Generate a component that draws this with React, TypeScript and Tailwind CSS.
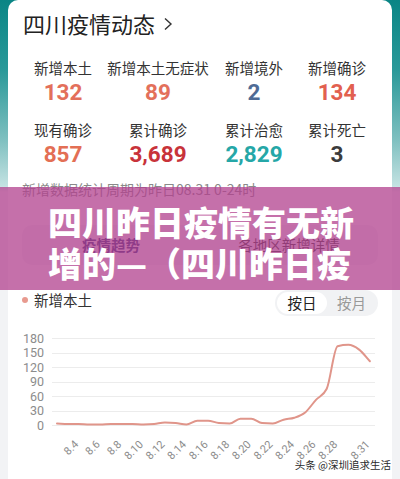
import React from "react";

const vals: number[] = [3, 2, 2, 1, 1, 2, 2, 2, 1, 2, 5, 4, 1, 9, 9, 4, 3, 13, 13, 4, 3, 11, 15, 26, 52, 75, 163, 166, 156, 132];
// days 2..31
const X0 = 57;
const DX = 10.79;
const xOf = (d: number) => X0 + (d - 2) * DX;
const yOf = (v: number) => 425 - v * (87 / 180);

function monotonePath(pts: [number, number][]) {
  const n = pts.length;
  const t: number[] = new Array(n).fill(0);
  const s: number[] = [];
  for (let i = 0; i < n - 1; i++) {
    s.push((pts[i + 1][1] - pts[i][1]) / (pts[i + 1][0] - pts[i][0]));
  }
  t[0] = s[0];
  t[n - 1] = s[n - 2];
  for (let i = 1; i < n - 1; i++) {
    const s0 = s[i - 1];
    const s1 = s[i];
    const h0 = pts[i][0] - pts[i - 1][0];
    const h1 = pts[i + 1][0] - pts[i][0];
    const p = (s0 * h1 + s1 * h0) / (h0 + h1);
    t[i] = (Math.sign(s0) + Math.sign(s1)) * Math.min(Math.abs(s0), Math.abs(s1), 0.5 * Math.abs(p));
  }
  let d = `M${pts[0][0].toFixed(2)},${pts[0][1].toFixed(2)}`;
  for (let i = 0; i < n - 1; i++) {
    const h = pts[i + 1][0] - pts[i][0];
    const c1x = pts[i][0] + h / 3;
    const c1y = pts[i][1] + (t[i] * h) / 3;
    const c2x = pts[i + 1][0] - h / 3;
    const c2y = pts[i + 1][1] - (t[i + 1] * h) / 3;
    d += ` C${c1x.toFixed(2)},${c1y.toFixed(2)} ${c2x.toFixed(2)},${c2y.toFixed(2)} ${pts[i + 1][0].toFixed(2)},${pts[i + 1][1].toFixed(2)}`;
  }
  return d;
}

const linePts: [number, number][] = vals.map((v, i) => [xOf(i + 2), yOf(v)]);
const labelDays = [4, 6, 8, 10, 12, 14, 16, 18, 20, 22, 24, 26, 28, 31];
const yTicks = [0, 30, 60, 90, 120, 150, 180];

type Stat = { label: string; value: string; color: string };
const row1: Stat[] = [
  { label: "新增本土", value: "132", color: "text-[#e3705b]" },
  { label: "新增本土无症状", value: "89", color: "text-[#e3705b]" },
  { label: "新增境外", value: "2", color: "text-[#4f6b95]" },
  { label: "新增确诊", value: "134", color: "text-[#e2604f]" },
];
const row2: Stat[] = [
  { label: "现有确诊", value: "857", color: "text-[#e36f55]" },
  { label: "累计确诊", value: "3,689", color: "text-[#c8333a]" },
  { label: "累计治愈", value: "2,829", color: "text-[#25a7a7]" },
  { label: "累计死亡", value: "3", color: "text-[#3c3c3c]" },
];

function StatRow({ items, className }: { items: Stat[]; className: string }) {
  return (
    <div className={`grid grid-cols-[94px_96px_96px_70px] pl-[8px] ${className}`}>
      {items.map((it) => (
        <div key={it.label} className="flex flex-col items-center">
          <div className="h-[20px] whitespace-nowrap text-[14.5px] leading-[20px] text-[#333]">{it.label}</div>
          <div className={`h-[28px] font-['Roboto',sans-serif] text-[22.5px] font-bold leading-[28px] ${it.color}`}>
            {it.value}
          </div>
        </div>
      ))}
    </div>
  );
}

export default function App() {
  return (
    <div className="relative h-[479px] w-[400px] overflow-hidden bg-[linear-gradient(180deg,#0a8585_0px,#2a9999_70px,#7fc0c0_140px,#c3e2e2_186px,#f2f3f5_192px,#f2f3f5_100%)] font-['Noto_Sans_CJK_SC','Noto_Sans',sans-serif]">
      <div className="mx-2 h-full rounded-t-[10px] bg-white">
        {/* title */}
        <div className="flex h-[38px] items-end pl-[15px]">
          <div className="flex h-[30px] items-center">
            <span className="text-[22px] leading-[30px] text-[#222]">四川疫情动态</span>
            <svg width="12" height="16" viewBox="0 0 12 16" className="ml-[7px] mt-[1px]">
              <polyline points="3,2.5 9,8 3,13.5" fill="none" stroke="#333" strokeWidth="1.4" />
            </svg>
          </div>
        </div>

        <StatRow items={row1} className="mt-[20px]" />
        <StatRow items={row2} className="mt-[14px]" />

        <div className="mt-[11px] pl-[14px] text-[14px] leading-[20px] text-[#8a8a8a]">
          新增数据统计周期为昨日08.31 0-24时
        </div>

        {/* tabs */}
        <div className="mx-[14px] mt-[26px] grid h-[40px] grid-cols-2 items-center rounded-[10px] bg-[#f3f4f7] text-center text-[14.5px]">
          <div className="font-bold text-[#2a2f7a]">疫情趋势</div>
          <div className="text-[#333]">各地区新增详情</div>
        </div>

        {/* chart header */}
        <div className="mt-[25px] flex items-start justify-between px-[14px]">
          <div className="flex h-[20px] items-center">
            <span className="h-[6px] w-[6px] rounded-full bg-[#e89a8f]" />
            <span className="ml-[6px] text-[14.5px] leading-[20px] text-[#333]">新增本土</span>
          </div>
          <div className="flex h-[26px] items-center rounded-full bg-[#f1f2f4] p-[2px]">
            <div className="h-[22px] w-[50px] rounded-full bg-white text-center text-[14.5px] leading-[22px] text-[#222]">按日</div>
            <div className="h-[22px] w-[49px] text-center text-[14.5px] leading-[22px] text-[#999]">按月</div>
          </div>
        </div>

        {/* chart */}
        <svg width="384" height="159" viewBox="8 320 384 159" className="mt-[4px] block">
          {yTicks.map((v) => {
            const y = Math.round(yOf(v)) + 0.5;
            return (
              <g key={v}>
                <line x1="52" x2="375" y1={y} y2={y} stroke="#ececec" strokeWidth="1" />
                <text
                  x="44"
                  y={yOf(v) + 4.5}
                  textAnchor="end"
                  fontSize="12.5"
                  fill="#8c8c8c"
                  fontFamily="Roboto, sans-serif"
                >
                  {v}
                </text>
              </g>
            );
          })}
          {labelDays.map((d) => {
            const ax = xOf(d) + 0.5;
            const ay = 445;
            return (
              <text
                key={d}
                x={ax}
                y={ay}
                textAnchor="end"
                fontSize="11"
                fill="#8c8c8c"
                fontFamily="Roboto, sans-serif"
                transform={`rotate(-45 ${ax} ${ay})`}
              >
                {`8.${d}`}
              </text>
            );
          })}
          <path d={monotonePath(linePts)} fill="none" stroke="#e0958a" strokeWidth="2" strokeLinejoin="round" strokeLinecap="round" />
        </svg>
      </div>

      {/* overlay banner */}
      <div className="absolute left-0 top-[187px] h-[103px] w-[400px] bg-[rgba(178,64,142,0.75)] pt-[14px] pl-[48px]">
        <div className="whitespace-nowrap text-[34px] font-black leading-[41px] text-white">四川昨日疫情有无新</div>
        <div className="whitespace-nowrap text-[34px] font-black leading-[41px] text-white">增的—（四川昨日疫</div>
      </div>

      {/* watermark */}
      <div className="absolute bottom-[7px] right-[9px] whitespace-nowrap text-[10.5px] leading-[14px] text-[#2a2a2a] [text-shadow:0_0_2px_#fff,0_0_1px_#fff]">
        头条 @深圳追求生活
      </div>
    </div>
  );
}
